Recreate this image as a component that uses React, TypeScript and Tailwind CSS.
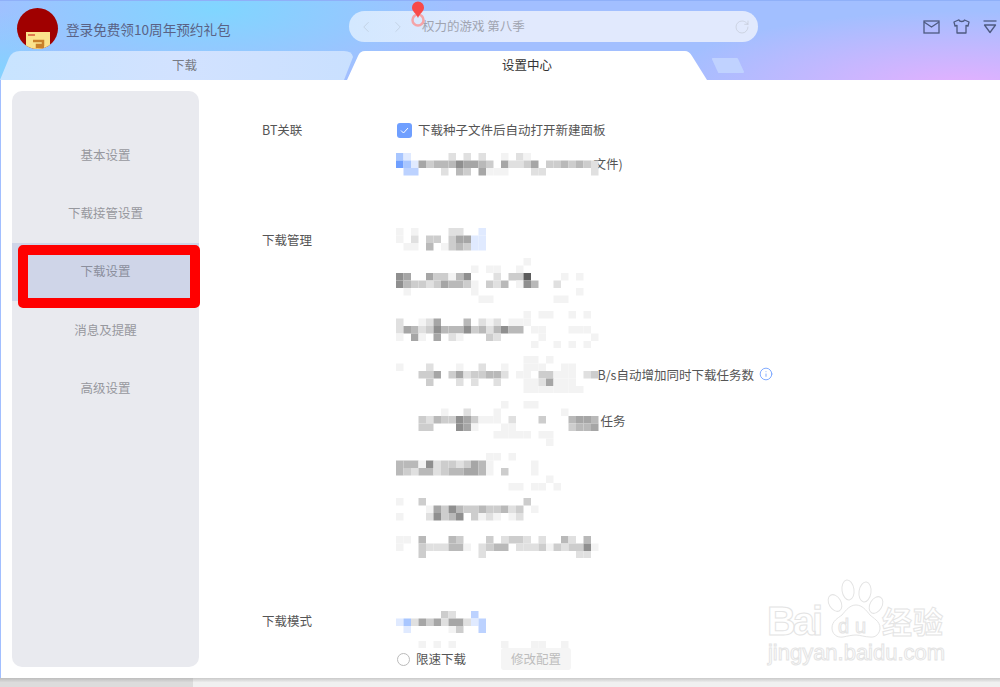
import { ChevronLeft, ChevronRight, Info, RotateCw } from "lucide-react";

const shades: Record<string, string> = {
  "1": "#f3f3f3",
  "2": "#e0e0e0",
  "3": "#cdcdcd",
  "4": "#b9b9b9",
  "5": "#a6a6a6",
  "6": "#8f8f8f",
  "9": "#5c5c5c",
  a: "#bcd2ff",
  b: "#6f9fff",
  c: "#e0eaff",
  d: "#a8c6ff",
};

// each string is one line of 7.5px censor blocks
function Mosaic({ lines }: { lines: string[] }) {
  return (
    <svg width={202.5} height={lines.length * 7.5} className="relative z-10 block shrink-0">
      {lines.map((line, y) =>
        line.split("").map((c, x) =>
          c === "." ? null : (
            <rect key={`${x}-${y}`} x={x * 7.5} y={y * 7.5} width={7.5} height={7.5} fill={shades[c]} />
          ),
        ),
      )}
    </svg>
  );
}

const menu = ["基本设置", "下载接管设置", "下载设置", "消息及提醒", "高级设置"];

function Sidebar() {
  return (
    <div className="relative mt-[11px] ml-[11px] flex h-[576px] w-[187px] shrink-0 flex-col rounded-[10px] bg-[#e9eaef] pt-[35px]">
      {menu.map((item, i) => (
        <div
          key={item}
          className={
            i === 2
              ? "flex h-[58.3px] items-center justify-center bg-[#cfd5e8] text-[12.5px] text-[#8b8f9d]"
              : "flex h-[58.3px] items-center justify-center text-[12.5px] text-[#97989e]"
          }
        >
          {item}
        </div>
      ))}
      <div className="absolute top-[154px] left-[6px] h-[63px] w-[182px] rounded-[5px] border-[10px] border-[#ff0000]" />
    </div>
  );
}

function TopIcons() {
  return (
    <div className="ml-auto flex items-center gap-[13px] pt-[18px] pr-[3px]">
      <svg width="17" height="14" viewBox="0 0 17 14" fill="none" stroke="#4e5a80" strokeWidth="1.3">
        <rect x="1" y="1" width="15" height="12" />
        <path d="M1 2l7.5 5L16 2" />
      </svg>
      <svg width="17" height="15" viewBox="0 0 17 15" fill="none" stroke="#4e5a80" strokeWidth="1.3">
        <path d="M5.5 1L1 3l1 4 2-.5V14h9V6.5l2 .5 1-4-4.500-2c-.5 2-5 2-5.500 0z" strokeLinejoin="round" />
      </svg>
      <svg width="14" height="14" viewBox="0 0 14 14" fill="none" stroke="#4e5a80" strokeWidth="1.3">
        <path d="M0.500 1h13" />
        <path d="M1.500 5h11L7 12.500z" strokeLinejoin="round" />
      </svg>
    </div>
  );
}

function Header() {
  return (
    <div className="relative h-[80px] border-t border-[#8fb0f8] bg-[#a2bfff] bg-[radial-gradient(ellipse_240px_75px_at_215px_8px,#80d6ff,transparent),radial-gradient(ellipse_70px_60px_at_0px_70px,#84d2ff,transparent),radial-gradient(ellipse_300px_75px_at_960px_85px,#e4b0ff,transparent)]">
      <div className="flex h-[50px] items-start">
        <div className="relative mt-[7px] ml-[17px] h-[41px] w-[41px] shrink-0 overflow-hidden rounded-full bg-[#a00000]">
          <svg width="41" height="41" viewBox="0 0 41 41" className="block">
            <rect x="9" y="24" width="24" height="18" fill="#fbe28c" />
            <rect x="11" y="26" width="7" height="2" fill="#e07a50" />
            <path d="M16 33h10v4h-6v2h7" fill="none" stroke="#c9802a" strokeWidth="2.500" />
          </svg>
        </div>
        <div className="mt-[19px] ml-[8px] w-[283px] shrink-0 text-[13.600px] leading-[18px] text-[#5a6285]">
          登录免费领10周年预约礼包
        </div>
        <div className="mt-[10px] flex h-[31px] w-[409px] shrink-0 items-center rounded-full bg-[linear-gradient(90deg,#d3e8ff,#e1e9fd_40%)] pr-[8px] pl-[8px]">
          <ChevronLeft size={18} strokeWidth={1} color="#bccbdc" />
          <ChevronRight size={18} strokeWidth={1} color="#bccbdc" className="ml-[14px]" />
          <span className="ml-[15px] text-[12.500px] text-[#a0a4b0]">权力的游戏 第八季</span>
          <RotateCw size={16} strokeWidth={1} color="#c3c8d4" className="ml-auto" />
        </div>
        <TopIcons />
      </div>

      <div className="flex h-[29px] items-start">
        <div className="flex h-[29px] w-[355px] shrink-0 items-center justify-center bg-[linear-gradient(90deg,#c8e4ff,#d2e2ff_50%,#c9e0ff)] pl-[14px] text-[12.500px] text-[#777b85] [clip-path:path('M0,29L9,7Q12,0,20,0L344,0Q352,0,353,6L344,29Z')]">
          下载
        </div>
        <div className="-ml-[8px] flex h-[29px] w-[360px] shrink-0 items-center justify-center bg-white text-[12.500px] text-[#333333] [clip-path:path('M0,29L11,5Q13,0,18,0L338,0Q342,0,345,5L360,29Z')]">
          设置中心
        </div>
        <svg width="34" height="17" viewBox="0 0 34 17" className="mt-[6px] ml-[4px]">
          <path d="M2 2h24l6 13H8z" fill="#c0d2ff" stroke="#c0d2ff" strokeWidth="2" strokeLinejoin="round" />
        </svg>
      </div>

      <svg width="18" height="28" viewBox="0 0 18 28" className="absolute -top-px left-[409px]">
        <circle cx="9" cy="20" r="5.500" fill="none" stroke="#f4a4a8" strokeWidth="2.500" />
        <path d="M9 18C7 13 3 11.500 3 7.500a6 6 0 0 1 12 0C15 11.500 11 13 9 18z" fill="#f84a4a" />
      </svg>
    </div>
  );
}

function Label({ text, className }: { text: string; className: string }) {
  return <div className={`w-[134px] shrink-0 text-[12.500px] leading-[16px] text-[#555555] ${className}`}>{text}</div>;
}

function Settings() {
  return (
    <div className="flex flex-1 flex-col pt-[42px] pl-[63px]">
      <div className="flex">
        <Label text="BT关联" className="" />
        <div className="flex flex-col">
          <div className="flex h-[16px] items-center">
            <div className="ml-px flex h-[15px] w-[15px] items-center justify-center rounded-[3px] bg-[#6f9fff]">
              <svg width="9" height="7" viewBox="0 0 9 7" fill="none" stroke="#ffffff" strokeWidth="1">
                <path d="M1 3.500L3.500 6L8 1" />
              </svg>
            </div>
            <span className="ml-[6px] text-[12.500px] text-[#555555]">下载种子文件后自动打开新建面板</span>
          </div>
          <div className="mt-[15px] flex items-center">
            <Mosaic
              lines={[
                "dc.....2.2.2..1.21.........",
                "bdc5344465543.52235.3343432",
                ".aa...2.43.5111...22......2",
              ]}
            />
            <span className="-ml-[5px] text-[12.500px] text-[#555555]">文件)</span>
          </div>
        </div>
      </div>

      <div className="mt-[52.500px] flex">
        <Label text="下载管理" className="mt-[4px]" />
        <div className="flex flex-col gap-[7.500px]">
          <Mosaic lines={["1.1....22..c", "1.2.33.355cc", ".11.4.1343cc"]} />
          <Mosaic
            lines={[
              ".................1.........",
              "..........1.11..1..........",
              "65..533146...2.339....1.1..",
              "64332354431.324.164..2.....",
              ".1........1.............1..",
              "...........11........11....",
            ]}
          />
          <Mosaic
            lines={[
              ".................1.11..1.1.",
              "2..125...4.212.111.........",
              "25423644463424644.11...111.",
              "1.51.5.21...32.....1......1",
              "..................1..1.1.1.",
            ]}
          />
          <div className="flex items-center">
            <Mosaic
              lines={[
                ".................11.1......",
                "1...2...1..2..1..111..11...",
                "...335.35233442.11.33111.23",
                "....3...2.2..2...1125111...",
                ".................11111111..",
              ]}
            />
            <span className="-ml-[1px] pt-[2px] text-[12.500px] whitespace-nowrap text-[#555555]">B/s自动增加同时下载任务数</span>
            <Info size={14} strokeWidth={1.500} color="#6f9fff" className="ml-[5px] shrink-0" />
          </div>
          <div className="flex items-center">
            <Mosaic
              lines={[
                "..............1..11........",
                "......1..2...1........1....",
                "...32433653111.2...3...4554",
                "...33...651...11.......3445",
                ".............11111.11......",
                "....................1......",
              ]}
            />
            <span className="ml-[2px] -mt-[4px] text-[12.500px] text-[#555555]">任务</span>
          </div>
          <Mosaic
            lines={[
              "............11.1...........",
              "4441623323541.....1........",
              "4324423445541.3...1........",
              "....................1......",
              "...............11.11.1.....",
            ]}
          />
          <Mosaic
            lines={[
              "1..3.............3.........",
              "....1536433433423.1........",
              "1...26346.3121.12..........",
            ]}
          />
          <div className="mt-[7.500px]">
            <Mosaic
              lines={[
                "11.4...43...3.2332.2..42.4.",
                "1..3222441.2344.22231323361",
                "...3.......2............22.",
              ]}
            />
          </div>
        </div>
      </div>

      <div className="mt-[52.500px] flex">
        <Label text="下载模式" className="mt-[2px]" />
        <div className="flex flex-col">
          <Mosaic lines={["......32..a.", "cd25352552ca", ".c.....13..a"]} />
          <div className="mt-[7.500px]">
            <Mosaic lines={["...1.1.1......1...11..1...."]} />
          </div>
          <div className="flex h-[22px] items-center">
            <div className="ml-px h-[13px] w-[13px] rounded-full border border-[#bbbbbb]" />
            <span className="ml-[6px] text-[12.500px] text-[#555555]">限速下载</span>
            <div className="ml-[35px] flex h-[22px] w-[70px] items-center justify-center rounded-[3px] bg-[#f5f5f5] text-[12.500px] text-[#bdbdbd]">
              修改配置
            </div>
          </div>
        </div>
      </div>
    </div>
  );
}

function Watermark() {
  return (
    <svg width="190" height="95" viewBox="0 0 190 95" fill="none" stroke="#e4e4e4" className="absolute top-[577px] left-[762px] z-20">
      <text x="5" y="58" fontFamily="'Liberation Sans', sans-serif" fontWeight="700" fontSize="40" textLength="56">Bai</text>
      <ellipse cx="73" cy="26" rx="6" ry="9" transform="rotate(-30 73 26)" />
      <ellipse cx="86" cy="13" rx="6" ry="10" transform="rotate(-8 86 13)" />
      <ellipse cx="103" cy="15" rx="6" ry="10" transform="rotate(8 103 15)" />
      <ellipse cx="114" cy="28" rx="6" ry="9" transform="rotate(30 114 28)" />
      <path d="M94 28c-6 0-10 5-14 10-4 3-10 6-10 13 0 6 5 10 11 9 5-1 9-2 13-2s9 2 14 2c6 1 10-4 10-9 0-7-7-10-10-13-4-5-8-10-14-10z" />
      <text x="76" y="56" fontFamily="'Liberation Sans', sans-serif" fontSize="20" textLength="28">du</text>
      <text x="120" y="56" fontFamily="'Noto Sans CJK SC', sans-serif" fontWeight="700" fontSize="30" textLength="61">经验</text>
      <text x="6" y="83" fontFamily="'Liberation Sans', sans-serif" fontSize="22" textLength="177">jingyan.baidu.com</text>
    </svg>
  );
}

export default function App() {
  return (
    <div className="relative h-[687px] w-[1000px] overflow-hidden bg-[#efefef] font-['Noto_Sans_CJK_SC','Liberation_Sans',sans-serif]">
      <Header />
      <div className="flex h-[598px] bg-white pl-px shadow-[inset_1px_0_0_#a2bfff]">
        <Sidebar />
        <Settings />
      </div>
      <div className="flex h-[9px]">
        <div className="w-[193px] bg-[linear-gradient(180deg,#bdbdbd,#dcdcdc_50%)]" />
        <div className="flex-1 bg-[linear-gradient(180deg,#c9c9c9,#f0f0f0_50%)]" />
      </div>
      <Watermark />
    </div>
  );
}
